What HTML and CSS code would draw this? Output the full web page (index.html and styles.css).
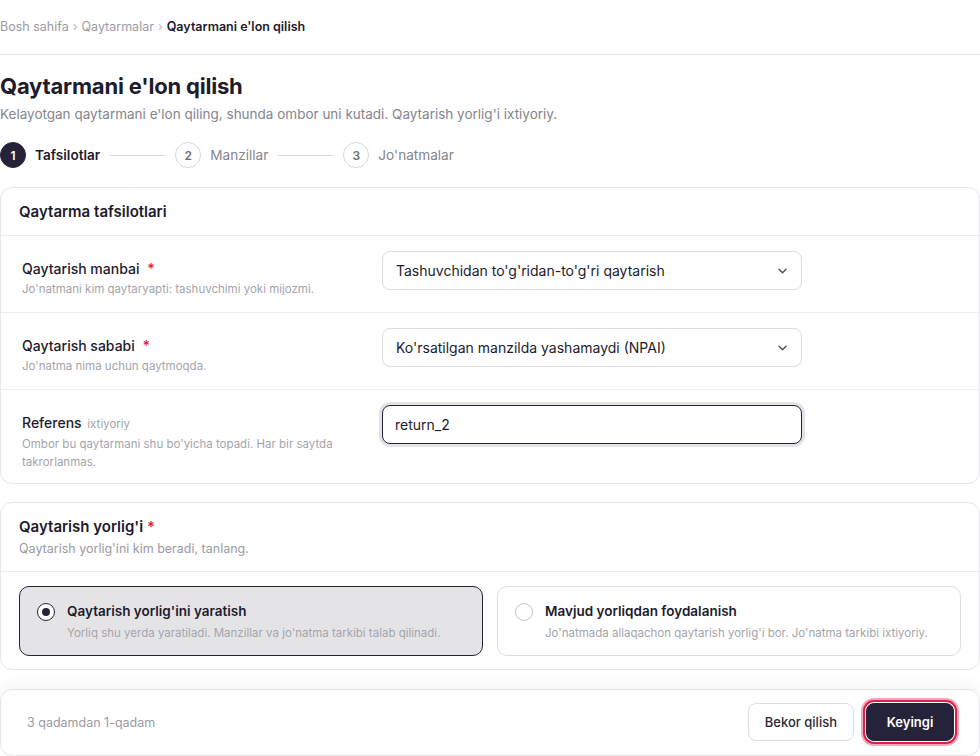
FILE: index.html
```html
<!DOCTYPE html>
<html lang="uz">
<head>
    <meta charset="UTF-8">
    <meta name="viewport" content="width=device-width, initial-scale=1.0">
    <title>Qaytarmani e'lon qilish</title>
    <link rel="stylesheet" href="styles.css">
</head>
<body>
    <nav class="crumbs">
        <a href="#">Bosh sahifa</a>
        <span class="sep">›</span>
        <a href="#">Qaytarmalar</a>
        <span class="sep">›</span>
        <span class="current">Qaytarmani e'lon qilish</span>
    </nav>

    <header class="page-head">
        <h1>Qaytarmani e'lon qilish</h1>
        <p>Kelayotgan qaytarmani e'lon qiling, shunda ombor uni kutadi. Qaytarish yorlig'i ixtiyoriy.</p>
    </header>

    <ol class="steps">
        <li class="step active"><span class="num">1</span>Tafsilotlar</li>
        <li class="step-line"></li>
        <li class="step"><span class="num">2</span>Manzillar</li>
        <li class="step-line"></li>
        <li class="step"><span class="num">3</span>Jo'natmalar</li>
    </ol>

    <section class="card">
        <div class="card-head">
            <h2>Qaytarma tafsilotlari</h2>
        </div>

        <div class="field-row">
            <div class="field-info">
                <label>Qaytarish manbai <span class="req">*</span></label>
                <p class="hint">Jo'natmani kim qaytaryapti: tashuvchimi yoki mijozmi.</p>
            </div>
            <div class="select">
                <span>Tashuvchidan to'g'ridan-to'g'ri qaytarish</span>
                <svg width="9" height="6" viewBox="0 0 9 6"><path d="M1 1.2l3.5 3.5L8 1.2" fill="none" stroke="#4b4b57" stroke-width="1.4" stroke-linecap="round" stroke-linejoin="round"/></svg>
            </div>
        </div>

        <div class="field-row">
            <div class="field-info">
                <label>Qaytarish sababi <span class="req">*</span></label>
                <p class="hint">Jo'natma nima uchun qaytmoqda.</p>
            </div>
            <div class="select">
                <span>Ko'rsatilgan manzilda yashamaydi (NPAI)</span>
                <svg width="9" height="6" viewBox="0 0 9 6"><path d="M1 1.2l3.5 3.5L8 1.2" fill="none" stroke="#4b4b57" stroke-width="1.4" stroke-linecap="round" stroke-linejoin="round"/></svg>
            </div>
        </div>

        <div class="field-row">
            <div class="field-info">
                <label>Referens <span class="opt">ixtiyoriy</span></label>
                <p class="hint">Ombor bu qaytarmani shu bo'yicha topadi. Har bir saytda takrorlanmas.</p>
            </div>
            <input class="text-input" type="text" value="return_2">
        </div>
    </section>

    <section class="card">
        <div class="card-head tall">
            <h2>Qaytarish yorlig'i <span class="req">*</span></h2>
            <p class="sub">Qaytarish yorlig'ini kim beradi, tanlang.</p>
        </div>
        <div class="options">
            <div class="option selected">
                <span class="radio"></span>
                <div>
                    <div class="opt-title">Qaytarish yorlig'ini yaratish</div>
                    <div class="opt-desc">Yorliq shu yerda yaratiladi. Manzillar va jo'natma tarkibi talab qilinadi.</div>
                </div>
            </div>
            <div class="option">
                <span class="radio"></span>
                <div>
                    <div class="opt-title">Mavjud yorliqdan foydalanish</div>
                    <div class="opt-desc">Jo'natmada allaqachon qaytarish yorlig'i bor. Jo'natma tarkibi ixtiyoriy.</div>
                </div>
            </div>
        </div>
    </section>

    <footer class="footer">
        <span class="progress">3 qadamdan 1-qadam</span>
        <div class="actions">
            <button class="btn">Bekor qilish</button>
            <button class="btn primary">Keyingi</button>
        </div>
    </footer>
</body>
</html>
```

FILE: styles.css
```css
body {
    margin: 0;
    font-family: Inter, "Noto Sans", sans-serif;
    color: #1d1b2c;
    background: #fff;
    width: 980px;
}

/* Breadcrumbs */
.crumbs {
    height: 55px;
    border-bottom: 1px solid #e6e6e8;
    display: flex;
    align-items: center;
    gap: 4px;
    font-size: 12.5px;
    box-sizing: border-box;
    padding-bottom: 1px;
}

.crumbs a {
    color: #9a9aa2;
    text-decoration: none;
}

.crumbs .sep {
    color: #b4b4ba;
}

.crumbs .current {
    font-weight: 600;
    color: #1d1b2c;
}

/* Title */
.page-head h1 {
    margin: 17px 0 0;
    font-size: 22px;
    line-height: 28px;
    font-weight: 700;
    letter-spacing: -0.2px;
}

.page-head p {
    margin: 4px 0 0;
    font-size: 13.5px;
    line-height: 20px;
    color: #85858d;
}

/* Stepper */
.steps {
    list-style: none;
    margin: 18px 0 0;
    padding: 0;
    display: flex;
    align-items: center;
}

.step {
    display: flex;
    align-items: center;
    gap: 9px;
    font-size: 13.6px;
    color: #85858d;
}

.step .num {
    width: 24px;
    height: 24px;
    border-radius: 50%;
    border: 1px solid #d8d8dc;
    display: flex;
    align-items: center;
    justify-content: center;
    font-size: 12px;
    font-weight: 600;
    color: #6e6e76;
    background: #fff;
}

.step.active {
    color: #1d1b2c;
    font-weight: 600;
}

.step.active .num {
    background: #25233a;
    border-color: #25233a;
    color: #fff;
}

.step-line {
    width: 55px;
    height: 1px;
    background: #d8d8dc;
    margin: 0 10px;
}

/* Cards */
.card {
    margin-top: 18px;
    border: 1px solid #e6e6e8;
    border-radius: 12px;
    background: #fff;
}

.steps + .card {
    margin-top: 19px;
}

.card-head {
    height: 47px;
    padding: 0 18px;
    display: flex;
    align-items: center;
    border-bottom: 1px solid #ececee;
}

.card-head h2 {
    margin: 0;
    font-size: 15px;
    font-weight: 600;
}

.card-head.tall {
    height: auto;
    display: block;
    padding: 14px 18px 13px;
}

.card-head.tall h2 {
    line-height: 20px;
}

.card-head .sub {
    margin: 3px 0 0;
    font-size: 12.5px;
    line-height: 18px;
    color: #9a9aa2;
}

.req {
    color: #e11d48;
    font-weight: 600;
}

/* Form rows */
.field-row {
    display: grid;
    grid-template-columns: 360px 420px;
    padding: 15px 21px 14px;
    border-bottom: 1px solid #ececee;
}

.field-row:last-child {
    border-bottom: none;
    padding-bottom: 12px;
}

.field-info {
    padding-top: 9px;
}

.field-info label {
    display: block;
    font-size: 14px;
    line-height: 18px;
    font-weight: 500;
}

.field-info .req {
    margin-left: 4px;
}

.field-info .opt {
    font-size: 11.5px;
    font-weight: 400;
    color: #a4a4ab;
    margin-left: 2px;
}

.hint {
    margin: 2px 0 0;
    font-size: 11.5px;
    line-height: 18px;
    color: #a4a4ab;
    padding-right: 20px;
}

.select {
    height: 39px;
    box-sizing: border-box;
    border: 1px solid #dededf;
    border-radius: 8px;
    padding: 0 14px 0 13px;
    display: flex;
    align-items: center;
    justify-content: space-between;
    font-size: 14px;
    color: #1d1b2c;
}

.text-input {
    height: 39px;
    box-sizing: border-box;
    border: 1.5px solid #25233a;
    border-radius: 8px;
    padding: 0 12px;
    font-family: inherit;
    font-size: 14px;
    color: #1d1b2c;
    box-shadow: 0 0 0 3px #e4e4e7;
    outline: none;
}

/* Label options */
.options {
    display: flex;
    gap: 14px;
    padding: 14px 18px 13px;
}

.option {
    flex: 1;
    display: flex;
    gap: 12px;
    padding: 14px 17px 13px;
    border: 1px solid #dededf;
    border-radius: 10px;
}

.option.selected {
    background: #e4e4e7;
    border-color: #25233a;
}

.radio {
    width: 18px;
    height: 18px;
    box-sizing: border-box;
    border-radius: 50%;
    border: 1px solid #c4c4c9;
    background: #fff;
    margin-top: 2px;
    flex-shrink: 0;
    display: flex;
    align-items: center;
    justify-content: center;
}

.option.selected .radio {
    border: 1.5px solid #25233a;
}

.option.selected .radio::after {
    content: "";
    width: 8px;
    height: 8px;
    border-radius: 50%;
    background: #25233a;
}

.opt-title {
    font-size: 13.5px;
    line-height: 20px;
    font-weight: 600;
}

.opt-desc {
    margin-top: 3px;
    font-size: 11.5px;
    line-height: 18px;
    color: #a4a4ab;
}

/* Footer */
.footer {
    margin-top: 19px;
    border: 1px solid #e6e6e8;
    border-radius: 12px;
    padding: 13px 25px 14px 26px;
    display: flex;
    align-items: center;
    justify-content: space-between;
    box-shadow: 0 -6px 14px rgba(0, 0, 0, 0.04);
}

.progress {
    font-size: 12.5px;
    color: #9a9aa2;
}

.actions {
    display: flex;
    gap: 12px;
}

.btn {
    height: 38px;
    padding: 0 16px;
    border: 1px solid #dededf;
    border-radius: 8px;
    background: #fff;
    font-family: inherit;
    font-size: 13px;
    font-weight: 500;
    color: #2a2a35;
}

.btn.primary {
    width: 88px;
    background: #25233a;
    border-color: #25233a;
    color: #fff;
    font-weight: 600;
    box-shadow: 0 0 0 1px #fff, 0 0 0 3px #e11d48, 0 0 0 5px #f4a9ba;
}
```
